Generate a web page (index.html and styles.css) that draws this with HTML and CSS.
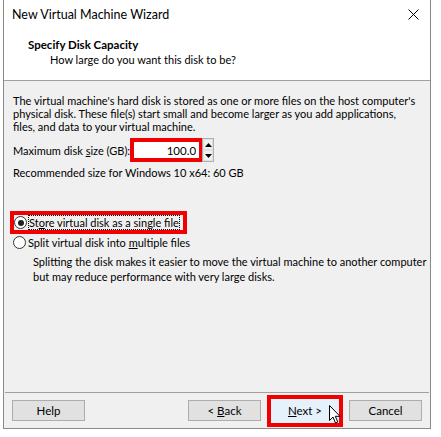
FILE: index.html
```html
<!DOCTYPE html>
<html lang="en">
<head>
  <meta charset="UTF-8" />
  <title>New Virtual Machine Wizard</title>
  <link rel="stylesheet" href="styles.css">
</head>
<body>

  <div class="window">

    <!-- Title bar -->
    <div class="titlebar">
      <span class="title">New Virtual Machine Wizard</span>
      <svg class="close" width="11" height="11" viewBox="0 0 11 11">
        <path d="M0.5 0.5 L10.5 10.5 M10.5 0.5 L0.5 10.5" stroke="#000" stroke-width="1" fill="none" />
      </svg>
    </div>

    <!-- Page header -->
    <header>
      <div class="heading">Specify Disk Capacity</div>
      <div class="subheading">How large do you want this disk to be?</div>
    </header>

    <!-- Page content -->
    <main>
      <p class="intro">
        The virtual machine's hard disk is stored as one or more files on the host computer's<br>
        physical disk. These file(s) start small and become larger as you add applications,<br>
        files, and data to your virtual machine.
      </p>

      <div class="size-row">
        <label for="size">Maximum disk <u>s</u>ize (GB):</label>
        <div class="mark mark-input">
          <input type="text" id="size" value="100.0" />
        </div>
        <div class="spinner">
          <span class="spin-btn">
            <svg width="7" height="4" viewBox="0 0 7 4"><path d="M3.5 0 L7 4 L0 4 Z" fill="#000" /></svg>
          </span>
          <span class="spin-btn">
            <svg width="7" height="4" viewBox="0 0 7 4"><path d="M0 0 L7 0 L3.5 4 Z" fill="#000" /></svg>
          </span>
        </div>
      </div>

      <p class="recommended">Recommended size for Windows 10 x64: 60 GB</p>

      <div class="options">
        <div class="mark mark-radio">
          <label class="radio">
            <span class="dot checked"></span>
            <span class="focus">St<u>o</u>re virtual disk as a single file</span>
          </label>
        </div>
        <label class="radio">
          <span class="dot"></span>
          <span>Split virtual disk into <u>m</u>ultiple files</span>
        </label>
        <p class="note">
          Splitting the disk makes it easier to move the virtual machine to another computer<br>
          but may reduce performance with very large disks.
        </p>
      </div>
    </main>

    <!-- Wizard buttons -->
    <footer>
      <button class="btn">Help</button>
      <div class="spacer"></div>
      <button class="btn">&lt; <u>B</u>ack</button>
      <div class="mark mark-next">
        <button class="btn btn-hover"><u>N</u>ext &gt;</button>
        <svg class="cursor" width="12" height="19" viewBox="0 0 12 19">
          <path d="M0.5 0.5 L0.5 15.5 L4 12 L6.5 18 L8.8 17 L6.3 11.3 L11 11.3 Z" fill="#fff" stroke="#000" stroke-width="1" stroke-linejoin="miter" />
        </svg>
      </div>
      <button class="btn">Cancel</button>
    </footer>

  </div>

</body>
</html>
```

FILE: styles.css
```css
body {
  margin: 0;
  padding: 0;
  background-color: #ffffff;
  font-family: Lato, "Liberation Sans", sans-serif;
  font-size: 11px;
  color: #000;
}
.window {
  margin-left: 3px;
  width: 426px;
  height: 428px;
  border: 1px solid #8a8a8a;
  border-top: none;
  display: flex;
  flex-direction: column;
  background-color: #f0f0f0;
}
.titlebar {
  height: 30px;
  background-color: #ffffff;
  display: flex;
  align-items: center;
  justify-content: space-between;
  padding: 0 11px 0 8px;
}
.title {
  font-size: 12.5px;
  margin-top: -1px;
}
.close {
  margin-top: -1px;
}
header {
  height: 51px;
  background-color: #ffffff;
  border-bottom: 1px solid #a0a0a0;
  box-sizing: border-box;
  padding: 7px 0 0 24px;
}
.heading {
  font-weight: bold;
  font-size: 11.5px;
  line-height: 15px;
}
.subheading {
  padding-left: 22px;
  line-height: 15px;
}
main {
  flex: 1;
  padding: 13px 9px 0 9px;
}
p {
  margin: 0;
  white-space: nowrap;
}
.intro {
  line-height: 13px;
}
.size-row {
  display: flex;
  align-items: center;
  margin-top: 5px;
}
.size-row label {
  margin-right: 0;
}
.mark {
  border: 4px solid #f00000;
}
.mark-input {
  width: 65px;
  height: 16px;
  background-color: #fff;
}
.mark-input input {
  width: 100%;
  height: 100%;
  border: none;
  outline: none;
  box-sizing: border-box;
  text-align: right;
  font-family: inherit;
  font-size: 11.5px;
  padding: 0 3px 0 0;
  background: #fff;
}
.spinner {
  display: flex;
  flex-direction: column;
  border: 1px solid #b0b0b0;
  margin-left: -1px;
  height: 22px;
  width: 10px;
  background-color: #f0f0f0;
}
.spin-btn {
  flex: 1;
  display: flex;
  align-items: center;
  justify-content: center;
  border: 1px solid #e0e0e0;
}
.recommended {
  margin-top: 4px;
  line-height: 13px;
}
.options {
  margin-top: 32px;
}
.mark-radio {
  display: inline-block;
  margin-left: -3px;
  height: 15px;
}
.radio {
  display: flex;
  align-items: center;
  height: 16px;
}
.mark-radio .radio {
  height: 15px;
  padding-right: 4px;
}
.dot {
  width: 13px;
  height: 13px;
  border: 1px solid #333;
  border-radius: 50%;
  background-color: #fff;
  box-sizing: border-box;
  margin-right: 2px;
  position: relative;
  flex-shrink: 0;
}
.dot.checked::after {
  content: "";
  position: absolute;
  left: 2.5px;
  top: 2.5px;
  width: 6px;
  height: 6px;
  border-radius: 50%;
  background-color: #222;
}
.focus {
  outline: 1px dotted #000;
  line-height: 13px;
}
.note {
  margin: 4px 0 0 20px;
  line-height: 15px;
}
footer {
  border-top: 1px solid #a0a0a0;
  margin: 0 1px;
  height: 35px;
  display: flex;
  align-items: center;
  padding: 0 7px;
  gap: 6px;
}
.spacer {
  flex: 1;
}
.btn {
  width: 73px;
  height: 21px;
  background-color: #e1e1e1;
  border: 1px solid #adadad;
  font-family: inherit;
  font-size: 11.5px;
  color: #000;
  padding: 0;
}
.btn-hover {
  background-color: #e5f1fb;
  border-color: #e5f1fb;
  width: 68px;
  height: 24px;
}
.mark-next {
  position: relative;
  display: flex;
}
.cursor {
  position: absolute;
  left: 58px;
  top: 6px;
}
```
